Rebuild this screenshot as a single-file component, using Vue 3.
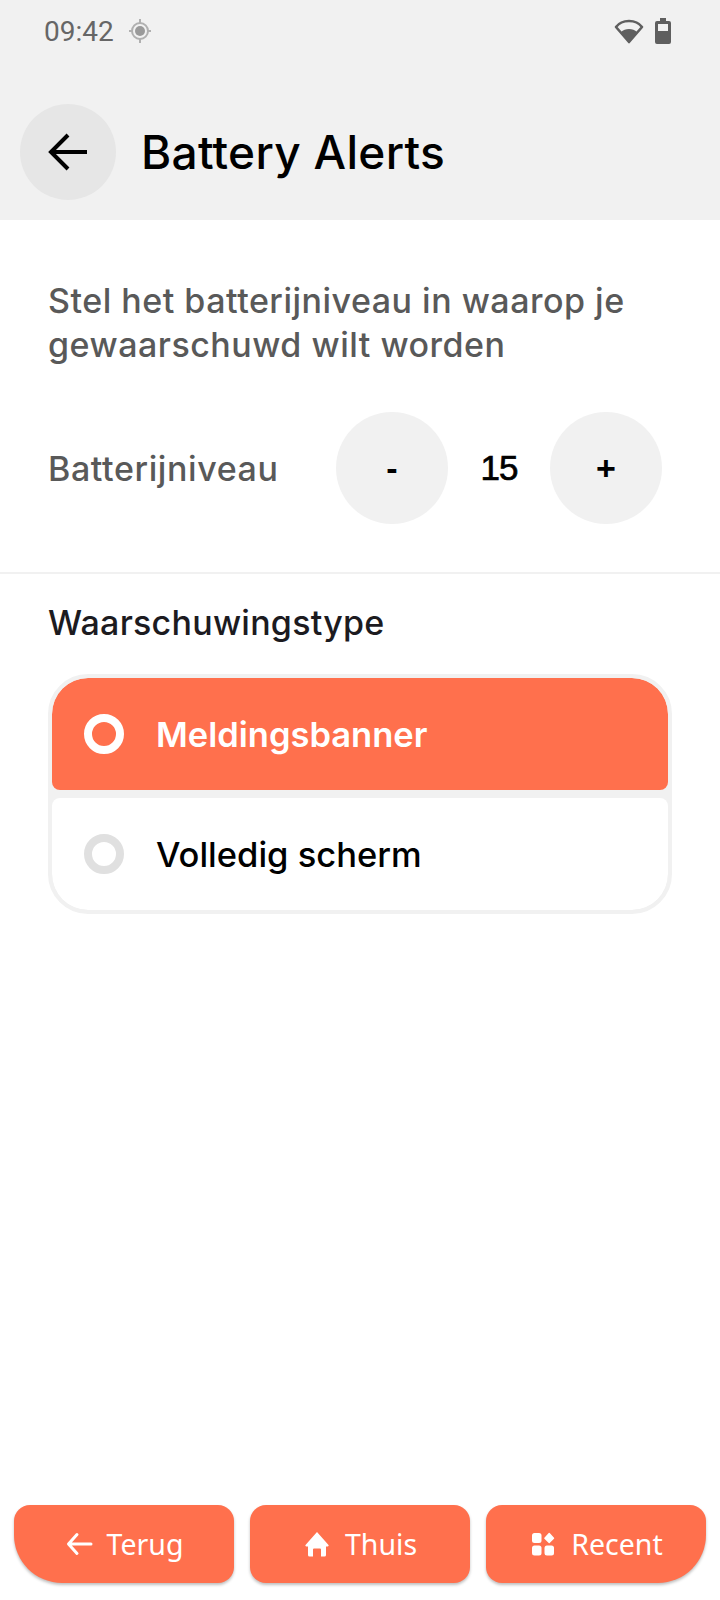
<template>
  <div class="screen">
    <header class="top">
      <div class="status">
        <div class="status-left">
          <span class="time">09:42</span>
          <svg class="loc" width="24" height="26" viewBox="0 0 24 26">
            <circle cx="12" cy="13" r="5" fill="#9a9a9a" />
            <circle cx="12" cy="13" r="8" fill="none" stroke="#b0b0b0" stroke-width="2" />
            <path d="M12 1v5M12 20v5M1 13h4M19 13h4" stroke="#b0b0b0" stroke-width="2" />
          </svg>
        </div>
        <div class="status-right">
          <svg width="30" height="26" viewBox="0 0 30 26">
            <path d="M15 24 2 9C8 1 22 1 28 9Z" fill="none" stroke="#5f5f5f" stroke-width="2.6" stroke-linejoin="round" />
            <path d="M15 25 7 14C11 10 19 10 23 14Z" fill="#5f5f5f" />
          </svg>
          <svg width="16" height="26" viewBox="0 0 16 26">
            <path d="M5 0h6v3h3a2 2 0 0 1 2 2v19a2 2 0 0 1-2 2H2a2 2 0 0 1-2-2V5a2 2 0 0 1 2-2h3Z" fill="#5f5f5f" />
            <rect x="3" y="6" width="10" height="7" fill="#f1f1f1" />
          </svg>
        </div>
      </div>
      <div class="title-row">
        <button class="back">
          <svg width="42" height="42" viewBox="0 0 42 42">
            <path d="M40 21H5M21 4 4 21l17 17" fill="none" stroke="#000" stroke-width="4" />
          </svg>
        </button>
        <h1>Battery Alerts</h1>
      </div>
    </header>

    <section class="level">
      <p class="intro">Stel het batterijniveau in waarop je gewaarschuwd wilt worden</p>
      <div class="stepper-row">
        <span class="stepper-label">Batterijniveau</span>
        <div class="stepper">
          <button class="round" @click="level--">-</button>
          <span class="value">{{ level }}</span>
          <button class="round" @click="level++">+</button>
        </div>
      </div>
    </section>

    <section class="type">
      <h2>Waarschuwingstype</h2>
      <div class="options">
        <div
          v-for="(option, index) in options"
          :key="option"
          class="option"
          :class="{ selected: selected === index }"
          @click="selected = index"
        >
          <span class="radio"></span>
          <span>{{ option }}</span>
        </div>
      </div>
    </section>

    <nav class="bottom">
      <button class="nav-btn">
        <svg width="28" height="28" viewBox="0 0 28 28">
          <path d="M26 14H4M12 4.500 3.500 14l8.500 9.500" fill="none" stroke="#fff" stroke-width="3" stroke-linecap="round" stroke-linejoin="round" />
        </svg>
        Terug
      </button>
      <button class="nav-btn">
        <svg width="28" height="28" viewBox="0 0 28 28">
          <path d="M14 2 25.500 15a1 1 0 0 1-1 1.500h-1.500V25a1.500 1.500 0 0 1-1.500 1.500H18V19.500a1 1 0 0 0-1-1h-6a1 1 0 0 0-1 1v7H6.500A1.500 1.500 0 0 1 5 25v-8.500H3.500a1 1 0 0 1-1-1.500Z" fill="#fff" />
        </svg>
        Thuis
      </button>
      <button class="nav-btn">
        <svg width="28" height="28" viewBox="0 0 28 28">
          <rect x="3" y="3" width="9.500" height="10" rx="2.500" fill="#fff" />
          <rect x="3" y="15.500" width="9.500" height="10" rx="2.500" fill="#fff" />
          <rect x="15.500" y="15.500" width="9.500" height="10" rx="2.500" fill="#fff" />
          <path d="M20.200 3.500 24.500 8.200l-4.300 4.300L15.900 8.200Z" fill="#fff" stroke="#fff" stroke-width="1.400" stroke-linejoin="round" />
        </svg>
        Recent
      </button>
    </nav>
  </div>
</template>

<script setup>
import { ref } from 'vue'

const level = ref(15)
const selected = ref(0)
const options = ['Meldingsbanner', 'Volledig scherm']
</script>

<style>
html, body {
  background: #fff;
}
</style>

<style scoped>
.screen {
  width: 720px;
  height: 1600px;
  background: #fff;
  display: flex;
  flex-direction: column;
  font-family: Inter, "Noto Sans", sans-serif;
  box-sizing: border-box;
}

button {
  border: none;
  font-family: inherit;
  cursor: pointer;
}

.top {
  background: #f1f1f1;
  height: 220px;
  box-sizing: border-box;
  padding: 0 20px;
}

.status {
  height: 62px;
  display: flex;
  align-items: center;
  justify-content: space-between;
  padding: 0 29px 0 24px;
}

.status-left {
  display: flex;
  align-items: center;
  gap: 14px;
}

.time {
  font-family: Roboto, sans-serif;
  font-size: 28px;
  font-weight: 400;
  color: #666;
}

.status-right {
  display: flex;
  align-items: center;
  gap: 11px;
}

.title-row {
  margin-top: 42px;
  display: flex;
  align-items: center;
  gap: 25px;
}

.back {
  width: 96px;
  height: 96px;
  border-radius: 50%;
  background: #e6e6e6;
  display: flex;
  align-items: center;
  justify-content: center;
  padding: 0;
}

h1 {
  margin: 0;
  font-size: 46px;
  font-weight: 500;
  letter-spacing: 0.3px;
  color: #000;
}

.level {
  padding: 59px 48px 0;
  height: 354px;
  box-sizing: border-box;
  border-bottom: 2px solid #f1f1f1;
}

.intro {
  margin: 0;
  font-size: 34px;
  line-height: 44px;
  font-weight: 500;
  letter-spacing: 0.5px;
  color: #595959;
}

.stepper-row {
  margin-top: 45px;
  display: flex;
  align-items: center;
  justify-content: space-between;
  padding-right: 10px;
}

.stepper-label {
  font-size: 34px;
  font-weight: 500;
  letter-spacing: 0.6px;
  color: #595959;
}

.stepper {
  display: flex;
  align-items: center;
}

.round {
  width: 112px;
  height: 112px;
  border-radius: 50%;
  background: #f1f1f1;
  color: #000;
  font-size: 34px;
  font-weight: 700;
  padding: 0;
  font-family: "Liberation Sans", sans-serif;
}

.value {
  width: 102px;
  text-align: center;
  font-family: "Liberation Sans", sans-serif;
  font-size: 35px;
  font-weight: 500;
  letter-spacing: -1px;
  color: #000;
  -webkit-text-stroke: 0.7px #000;
}

.type {
  padding: 27px 48px 0;
  flex: 1;
}

h2 {
  margin: 0 0 29px;
  font-size: 34px;
  line-height: 44px;
  font-weight: 500;
  letter-spacing: 0.25px;
  color: #1c1b1f;
}

.options {
  width: 624px;
  box-sizing: border-box;
  border: 4px solid #f1f1f1;
  border-radius: 40px;
  background: #f1f1f1;
  display: flex;
  flex-direction: column;
  gap: 8px;
  overflow: hidden;
}

.option {
  height: 112px;
  background: #fff;
  display: flex;
  align-items: center;
  gap: 32px;
  padding-left: 32px;
  font-size: 34.500px;
  font-weight: 500;
  color: #000;
  border-radius: 8px;
}

.option:first-child {
  border-radius: 36px 36px 8px 8px;
}

.option:last-child {
  border-radius: 8px 8px 36px 36px;
}

.option.selected {
  background: #ff704d;
  color: #fff;
  font-weight: 600;
}

.radio {
  width: 40px;
  height: 40px;
  box-sizing: border-box;
  border: 8px solid #e0e0e0;
  border-radius: 50%;
}

.selected .radio {
  border-color: #fff;
}

.bottom {
  height: 95px;
  padding: 0 14px;
  display: flex;
  gap: 16px;
  align-items: flex-start;
  box-sizing: border-box;
}

.nav-btn {
  width: 220px;
  height: 78px;
  background: #ff704d;
  color: #fff;
  border-radius: 16px;
  display: flex;
  align-items: center;
  justify-content: center;
  gap: 14px;
  font-family: "Noto Sans", sans-serif;
  font-size: 28.500px;
  padding: 0;
  box-shadow: 0 2px 3px rgba(0, 0, 0, 0.25);
}

.nav-btn:first-child {
  border-bottom-left-radius: 48px;
}

.nav-btn:last-child {
  border-bottom-right-radius: 48px;
}
</style>
